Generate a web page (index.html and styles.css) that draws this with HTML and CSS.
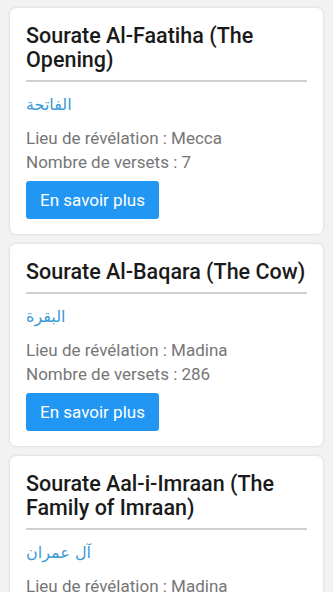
FILE: index.html
```html
<!DOCTYPE html>
<html lang="fr">
<head>
    <meta charset="UTF-8">
    <title>Sourates</title>
    <link rel="stylesheet" href="styles.css">
</head>
<body>
<div class="list">
    <div class="card">
        <h2 class="title">Sourate Al-Faatiha (The Opening)</h2>
        <p class="arabic">الفاتحة</p>
        <p class="info">Lieu de révélation : Mecca</p>
        <p class="info">Nombre de versets : 7</p>
        <button type="button" class="btn">En savoir plus</button>
    </div>
    <div class="card">
        <h2 class="title">Sourate Al-Baqara (The Cow)</h2>
        <p class="arabic">البقرة</p>
        <p class="info">Lieu de révélation : Madina</p>
        <p class="info">Nombre de versets : 286</p>
        <button type="button" class="btn">En savoir plus</button>
    </div>
    <div class="card">
        <h2 class="title">Sourate Aal-i-Imraan (The Family of Imraan)</h2>
        <p class="arabic">آل عمران</p>
        <p class="info">Lieu de révélation : Madina</p>
        <p class="info">Nombre de versets : 200</p>
        <button type="button" class="btn">En savoir plus</button>
    </div>
</div>
</body>
</html>
```

FILE: styles.css
```css
body {
    margin: 0;
    background-color: #f2f2f2;
    font-family: Roboto, "Noto Sans", sans-serif;
}

.list {
    display: flex;
    flex-direction: column;
    gap: 10px;
    padding: 8px 10px;
}

.card {
    background-color: #fff;
    border-radius: 6px;
    box-shadow: 0 0 3px rgba(0, 0, 0, 0.15);
    padding: 16px 16px 15px;
}

.title {
    margin: 0;
    padding-bottom: 8px;
    border-bottom: 2px solid #cfcfcf;
    font-size: 21.5px;
    font-weight: 500;
    line-height: 24px;
    color: #1a1a1a;
}

.arabic {
    margin: 12px 0 10px;
    font-family: "DejaVu Sans", sans-serif;
    font-size: 16px;
    line-height: 22px;
    color: #3b99d6;
}

.info {
    margin: 0;
    font-size: 17px;
    line-height: 24px;
    color: #767676;
}

.btn {
    margin-top: 7px;
    height: 38px;
    padding: 0 14px;
    border: none;
    border-radius: 3px;
    background-color: #2196f3;
    color: #fff;
    font-family: Roboto, sans-serif;
    font-size: 17px;
}
```
